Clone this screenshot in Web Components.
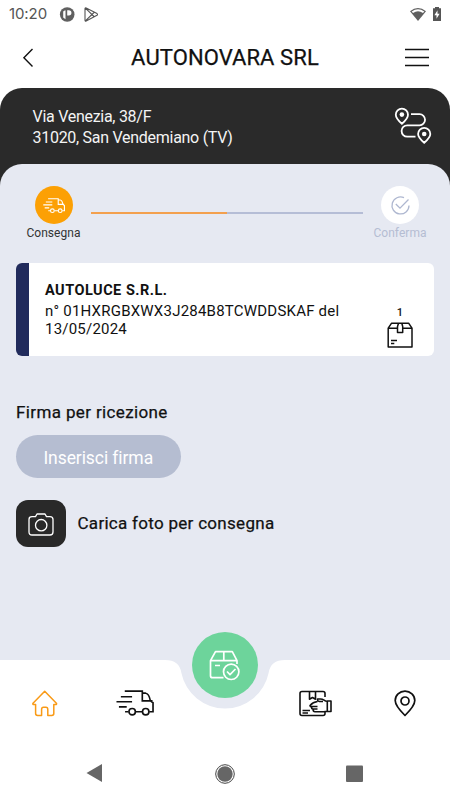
<!DOCTYPE html>
<html lang="it">
<head>
<meta charset="utf-8">
<title>Consegna</title>
<style>
html,body{margin:0;padding:0}
body{width:450px;height:800px;overflow:hidden;background:#fff;font-family:Roboto,"Open Sans",sans-serif;color:#111}
</style>
</head>
<body>
<delivery-app></delivery-app>
<script>
const define = (name, css, html) => customElements.define(name, class extends HTMLElement {
  constructor() {
    super();
    this.attachShadow({mode: 'open'}).innerHTML = `<style>*{box-sizing:border-box}svg{display:block;flex:none;overflow:visible}${css}</style>${html}`;
  }
});

const truck = `
  <path d="M9 1H27V11H37.5M27 3.2H30.5Q33.8 3.5 35.3 11L38 13V22.2H34.2M26.8 22.2H20.4M12.8 22.2H9.3M5 6.8H16.5M.5 12H16.5M3 17.2H11"/>
  <circle cx="16.6" cy="22.2" r="3.3"/><circle cx="30.5" cy="22.2" r="3.3"/>`;

define('status-bar', `
  :host{display:flex;height:28px;padding:0 9px 0 9px;align-items:center;color:#555}
  .time{font:400 15px/28px Inter,Roboto,sans-serif;letter-spacing:-.1px;width:51px;white-space:nowrap}
  .sp{flex:1}`, `
  <span class="time">10:20</span>
  <svg width="15" height="15" viewBox="0 0 15 15"><circle cx="7.2" cy="7.5" r="7.3" fill="#606060"/><path d="M3.2 4.5Q4 3.5 5.5 3.3V12.2L3.2 10.5ZM7.2 3.2H8.8A2.6 2.6 0 0 1 8.8 8.5H7.2Z" fill="#fff"/></svg>
  <svg width="15" height="15" viewBox="0 0 15 15" style="margin-left:9px" fill="none" stroke="#555" stroke-width="1.1" stroke-linejoin="round"><path d="M1 1.7Q1 .4 2.2 1L13 6.6Q14 7.4 13 8.2L2.2 14Q1 14.5 1 13.2ZM1.4 1.2 10.5 10M1.4 13.8 10.5 5"/></svg>
  <span class="sp"></span>
  <svg width="16" height="13" viewBox="0 0 16 13"><path d="M0 3.2Q8-3 16 3.2L8 13Z" fill="#606060"/><path d="M1.7 3.6Q8-1 14.3 3.6L13 5Q8 1.7 3 5Z" fill="#fff"/></svg>
  <svg width="8" height="14" viewBox="0 0 8 14" style="margin-left:7px"><path d="M0 1.3H2V0H6V1.3H8V14H0Z" fill="#555"/><path d="M4.5 3.3 1.4 8.2H3.5V11.7L6.6 6.8H4.5Z" fill="#fff"/></svg>`);

define('app-header', `
  :host{display:flex;height:60px;padding:0 21px 1px 23px;align-items:center;justify-content:space-between}
  h1{margin:0;font-size:22px;line-height:28px;font-weight:400;-webkit-text-stroke:.25px #111;color:#111;white-space:nowrap;padding:1px 2px 0 0;letter-spacing:.1px}`, `
  <svg width="24" height="20" viewBox="0 0 24 20" fill="none" stroke="#111" stroke-width="1.4"><path d="M9.5 1 .9 9.7 9.5 18.5"/></svg>
  <h1><slot></slot></h1>
  <svg width="24" height="20" viewBox="0 0 24 20" stroke="#111" stroke-width="1.6"><path d="M0 1.5H24M0 9.5H24M0 17.5H24"/></svg>`);

define('address-bar', `
  :host{display:flex;height:98px;margin-bottom:-22px;background:#2a2a2a;border-radius:22px 22px 0 0;padding:18px 19px 0 32.5px;justify-content:space-between;color:#f4f4f4}
  div{font-size:16px;line-height:21px;white-space:nowrap;letter-spacing:-.28px}`, `
  <div><slot></slot></div>
  <svg width="36" height="36" viewBox="0 0 36 36" style="margin-top:2px" fill="none" stroke="#fff" stroke-width="1.8"><path d="M6.9 15.8Q.8 10.5.8 6.8A6.1 6.1 0 0 1 13 6.8Q13 10.5 6.9 15.8ZM29.2 34.8Q23.1 29.5 23.1 26A6.1 6.1 0 0 1 35.3 26Q35.3 29.5 29.2 34.8ZM16 6.2H24.5A5.5 5.5 0 0 1 24.5 17.3H12.3A5.6 5.6 0 0 0 12.3 28.7H20.5"/><circle cx="6.9" cy="6.6" r="2.3" fill="#fff" stroke="none"/><circle cx="29.2" cy="26" r="2.3" fill="#fff" stroke="none"/></svg>`);

define('step-item', `
  :host{display:flex;flex-direction:column;align-items:center;width:60px;color:#333}
  :host([pending]){color:#b5bdd2}
  .dot{width:38px;height:38px;border-radius:50%;background:#fca004;display:flex;align-items:center;justify-content:center}
  :host([pending]) .dot{background:#fff}
  .label{font-size:12px;line-height:14px;margin-top:2px;letter-spacing:.05px;white-space:nowrap}`, `
  <div class="dot"><slot name="icon"></slot></div><div class="label"><slot></slot></div>`);

define('step-progress', `
  :host{display:flex;height:77px;padding:22px 20px 0 23.5px;justify-content:space-between}
  .line{height:1.5px;width:272px;margin-top:26px;background:linear-gradient(90deg,#f3a04e 0 50%,#b5bdd6 50%)}
  svg{display:block}`, `
  <step-item><svg slot="icon" width="22" height="15" viewBox="0 0 39 26" style="margin:1px 0 0 1px" fill="none" stroke="#fff" stroke-width="2">${truck}</svg>Consegna</step-item>
  <div class="line"></div>
  <step-item pending><svg slot="icon" width="19" height="19" viewBox="0 0 19 19" fill="none" stroke="#aeb7d0" stroke-width="1.3"><path d="M13 1.7A8.5 8.5 0 1 0 18 9.5M4.8 8 9 12.2 17.5 3.5"/></svg>Conferma</step-item>`);

define('shipment-card', `
  :host{display:flex;margin:22px 16px 0;height:93px;background:#fff;border-radius:6px;overflow:hidden}
  .tab{width:13px;background:#212b5c}
  .info{flex:1;padding:19px 0 0 16px;white-space:nowrap}
  .name{font-weight:700;font-size:14.5px;line-height:18px;margin-bottom:2px;letter-spacing:.5px}
  .doc{font-size:15px;line-height:18px;letter-spacing:.22px}
  .count{width:26px;margin:43px 21px 0 0;display:flex;flex-direction:column;align-items:center;font-size:11px;line-height:14px;font-weight:500}`, `
  <div class="tab"></div>
  <div class="info"><div class="name"><slot name="name"></slot></div><div class="doc"><slot></slot></div></div>
  <div class="count"><span>1</span><svg width="26" height="26" viewBox="0 0 26 26" style="margin-top:2px" fill="none" stroke="#111" stroke-width="1.5" stroke-linejoin="round"><path d="M1.2 6.2 4.6 1.2H21.6L25 6.2V25H1.2ZM1.2 6.2H10.5M15.7 6.2H25M11.5 1.2 10.5 4.5V10.5H15.7V4.5L14.8 1.2M4 18.5H10M4 21.5H7.3"/></svg></div>`);

define('sign-button', `
  :host{display:flex;width:164.5px;height:43px;border-radius:22px;background:#b5bdd1;color:#fff;align-items:center;justify-content:center;font-size:17.5px;letter-spacing:-.08px;white-space:nowrap}
  span{padding-top:2px}`, `<span><slot></slot></span>`);

define('photo-upload', `
  :host{display:flex;align-items:center;height:47px;font-size:17px;white-space:nowrap;letter-spacing:.29px;-webkit-text-stroke:.25px #111}
  .tile{width:49.5px;height:47px;border-radius:12px;background:#292929;display:flex;align-items:center;justify-content:center;margin-right:12px}
  span{margin-top:-1px}`, `
  <div class="tile"><svg width="26" height="23" viewBox="0 0 26 23" style="margin-top:1px" fill="none" stroke="#fff" stroke-width="1.3" stroke-linejoin="round"><path d="M4 3.6H7.5L9 1H17L18.5 3.6H22Q25 3.6 25 6.5V19Q25 22 22 22H4Q1 22 1 19V6.5Q1 3.6 4 3.6Z"/><circle cx="13.2" cy="12.2" r="5.7"/></svg></div><span><slot></slot></span>`);

define('main-panel', `
  :host{display:block;height:496px;background:#e6e9f2;border-radius:22px 22px 0 0}
  .actions{display:flex;flex-direction:column;align-items:flex-start;padding:45px 16px 0}
  h2{margin:0 0 12px;font-size:17px;line-height:22px;font-weight:400;letter-spacing:.37px;-webkit-text-stroke:.25px #111;white-space:nowrap}
  photo-upload{margin-top:22px}`, `
  <step-progress></step-progress>
  <shipment-card><span slot="name">AUTOLUCE S.R.L.</span>n° 01HXRGBXWX3J284B8TCWDDSKAF del<br>13/05/2024</shipment-card>
  <div class="actions"><h2>Firma per ricezione</h2><sign-button>Inserisci firma</sign-button><photo-upload>Carica foto per consegna</photo-upload></div>`);

define('tab-bar', `
  :host{display:flex;position:relative;height:88px;background:#fff;padding:30px 34px 0 32px;justify-content:space-between;align-items:flex-start}
  .notch{position:absolute;left:165px;top:-1px}
  .fab{position:absolute;left:192px;top:-28px;width:66px;height:66px;border-radius:50%;background:#6dd49b;display:flex;align-items:center;justify-content:center}
  .grp{display:flex}`, `
  <svg class="notch" width="120" height="51" viewBox="0 0 120 51"><path d="M0 0H120V1Q105.5 1 103.6 14A44.5 44.5 0 0 1 16.4 14Q14.5 1 0 1Z" fill="#e6e9f2"/></svg>
  <div class="grp">
  <svg width="26" height="27" viewBox="0 0 26 27" fill="none" stroke="#f99a16" stroke-width="1.5" stroke-linejoin="round"><path d="M12.7 1.2 1 13.2Q.3 14.5 2 14.5H3.6V23.5Q3.6 25.4 5.6 25.4H9.6V19.5Q9.6 17.3 11.5 17.3H13.9Q15.8 17.3 15.8 19.5V25.4H19.8Q21.8 25.4 21.8 23.5V14.5H23.4Q25.1 14.5 24.4 13.2Z"/></svg>
  <svg width="38" height="25.5" viewBox="0 0 39 26" style="margin-left:58px" fill="none" stroke="#111" stroke-width="1.7">${truck}</svg>
  </div>
  <div class="grp">
  <svg width="33" height="27" viewBox="0 0 33 27" fill="none" stroke="#111" stroke-width="1.6" stroke-linejoin="round"><path d="M26 7V3.5Q26 1.5 24 1.5H3Q1 1.5 1 3.5V23.5Q1 25.5 3 25.5H24Q26 25.5 26 23.5V22M10.5 1.5V9.2L13.5 7.5 16.5 9.2V1.5M3.5 20.5H11M3.5 23H9"/><path d="M28 11.3C25 11.3 25 9 21.5 9H18.5Q18 11 20.5 11.5H24M18.5 11.5Q14 12 11 15.5Q11 17 13 16.5H18.5M13 16.5Q12 19 14 19H18.5M14 19Q14 21.8 16 21.8H25Q26.5 21.2 28 21.2M28.3 11H32V21.5H28.3Z"/></svg>
  <svg width="22" height="27" viewBox="0 0 22 27" style="margin-left:62px" fill="none" stroke="#111" stroke-width="1.7" stroke-linejoin="round"><path d="M11 25.5Q1.2 16 1.2 10.6A9.8 9.5 0 0 1 20.8 10.6Q20.8 16 11 25.5Z"/><circle cx="11" cy="11" r="4"/></svg>
  </div>
  <div class="fab"><svg width="31" height="30" viewBox="0 0 31 30" style="margin-right:1px" fill="none" stroke="#fff" stroke-width="1.7" stroke-linejoin="round"><path d="M14.5 27.7H3.5Q1.5 27.7 1.5 25.7V10.7L6.5 1.7H23.3L28 10.7V14M1.5 10.7H28M14.8 10.7V1.7M6 15.5H11"/><circle cx="22.2" cy="21.8" r="7.7"/><path d="M18 21.5 21 24.7 26.5 19"/></svg></div>`);

define('system-nav', `
  :host{display:flex;height:52px;justify-content:space-between;padding:15px 87px 0 85.5px;background:#fff}`, `
  <svg width="17" height="20" viewBox="0 0 17 20"><path d="M16 1V19L.5 10Z" fill="#666"/></svg>
  <svg width="22" height="22" viewBox="0 0 22 22" style="margin-left:2px"><circle cx="11" cy="11" r="9.3" fill="none" stroke="#444" stroke-width="1"/><circle cx="11" cy="11" r="7.7" fill="#666"/></svg>
  <svg width="17" height="20" viewBox="0 0 17 20"><rect y="2.5" width="17" height="16.5" rx="1" fill="#666"/></svg>`);

define('delivery-app', `
  :host{display:flex;flex-direction:column;width:450px;height:800px;overflow:hidden;background:#fff}
  status-bar,app-header,address-bar,main-panel,tab-bar,system-nav{flex:none}`, `
  <status-bar></status-bar>
  <app-header>AUTONOVARA SRL</app-header>
  <address-bar>Via Venezia, 38/F<br>31020, San Vendemiano (TV)</address-bar>
  <main-panel></main-panel>
  <tab-bar></tab-bar>
  <system-nav></system-nav>`);
</script>
</body>
</html>
